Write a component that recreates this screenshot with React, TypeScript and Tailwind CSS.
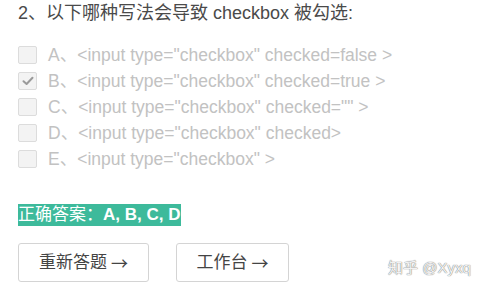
import React from "react";

const OPTIONS = [
  { key: "A", text: '<input type="checkbox" checked=false >', checked: false },
  { key: "B", text: '<input type="checkbox" checked=true >', checked: true },
  { key: "C", text: '<input type="checkbox" checked="" >', checked: false },
  { key: "D", text: '<input type="checkbox" checked>', checked: false },
  { key: "E", text: '<input type="checkbox" >', checked: false },
];

function Box({ checked }: { checked: boolean }) {
  return (
    <span className="flex h-[18px] w-[19px] shrink-0 items-center justify-center rounded-[2px] border border-[#dcdcdc] bg-[#f3f3f3]">
      {checked && (
        <svg width="12" height="10" viewBox="0 0 12 10" fill="none">
          <path d="M1.5 5.2 L4.6 8 L10.5 1.8" stroke="#9a9a9a" strokeWidth="2" strokeLinecap="round" strokeLinejoin="round" />
        </svg>
      )}
    </span>
  );
}

function Arrow() {
  return <span style={{ fontFamily: '"Noto Sans CJK SC", sans-serif' }}>→</span>;
}

export default function App() {
  return (
    <div
      className="relative h-[291px] w-[480px] overflow-hidden bg-white pl-[18px]"
      style={{ fontFamily: '"Liberation Sans", "Noto Sans CJK SC", sans-serif' }}
    >
      <p className="pt-[1px] text-[18px] leading-[24px] text-[#4a4a4a]">
        2、以下哪种写法会导致 checkbox 被勾选:
      </p>

      <div className="mt-[17px] flex flex-col">
        {OPTIONS.map((o) => (
          <label key={o.key} className="flex h-[26px] items-center gap-[11px] text-[17.5px] text-[#c2c2c2]">
            <Box checked={o.checked} />
            <span className="whitespace-pre">
              {o.key}、{o.text}
            </span>
          </label>
        ))}
      </div>

      <div className="mt-[32px] flex">
        <span className="h-[22px] bg-[#3dba9b] pr-[1px] text-[17px] leading-[22px] text-white">
          正确答案：<span className="font-bold">A, B, C, D</span>
        </span>
      </div>

      <div className="mt-[17px] flex gap-[27px]">
        <button className="flex h-[39px] w-[131px] items-center justify-center gap-[4px] rounded-[3px] border border-[#d4d4d4] bg-white text-[17px] text-[#444]">
          重新答题 <Arrow />
        </button>
        <button className="flex h-[39px] w-[113px] items-center justify-center gap-[4px] rounded-[3px] border border-[#d4d4d4] bg-white text-[17px] text-[#444]">
          工作台 <Arrow />
        </button>
      </div>

      <span
        className="absolute left-[388px] top-[257px] text-[15px] text-[#f2f2f2]"
        style={{ textShadow: "0 0 1px #777, 0 0 1px #999" }}
      >
        知乎 @Xyxq
      </span>
    </div>
  );
}
